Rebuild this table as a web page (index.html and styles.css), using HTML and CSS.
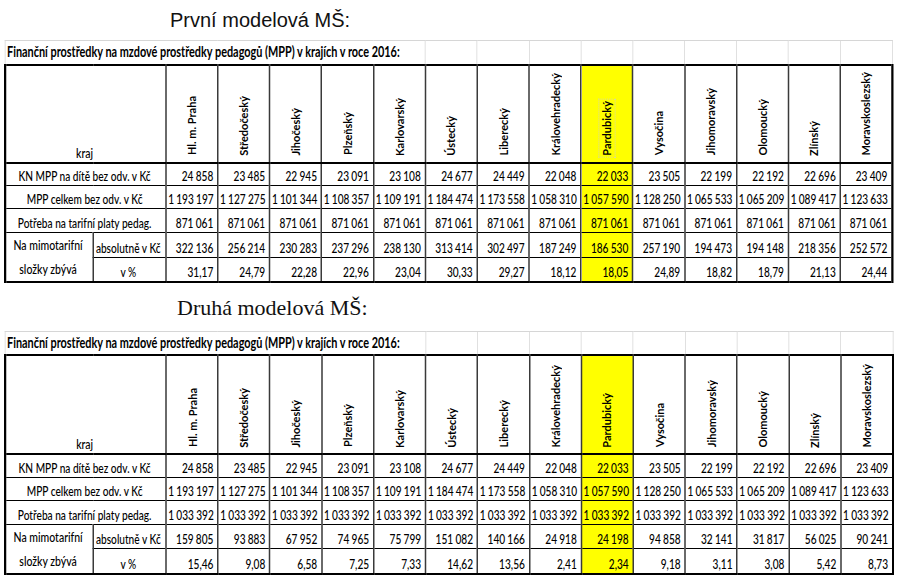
FILE: index.html
```html
<!DOCTYPE html>
<html lang="cs">
<head>
<meta charset="utf-8">
<title>Modelové MŠ</title>
<link rel="stylesheet" href="styles.css">
</head>
<body>
<div class="page">
  <h2 class="title title-sans">První modelová MŠ:</h2>
  <div class="sheet">
    <table class="grid">
      <colgroup><col class="c-a"><col class="c-b"><col class="c-r" span="14"></colgroup>
      <tr class="caption-row"><td colspan="7" class="caption">Finanční prostředky na mzdové prostředky pedagogů (MPP) v krajích v roce 2016:</td><td></td><td></td><td></td><td></td><td></td><td></td><td></td><td></td><td class="last"></td></tr>
      <tr class="head"><th colspan="2" class="kraj first">kraj</th><th class="region"><span class="rot">Hl. m. Praha</span></th><th class="region"><span class="rot">Středočeský</span></th><th class="region"><span class="rot">Jihočeský</span></th><th class="region"><span class="rot">Plzeňský</span></th><th class="region"><span class="rot">Karlovarský</span></th><th class="region"><span class="rot">Ústecký</span></th><th class="region"><span class="rot">Liberecký</span></th><th class="region"><span class="rot">Královehradecký</span></th><th class="region hl"><span class="rot sel">Pardubický</span></th><th class="region"><span class="rot">Vysočina</span></th><th class="region"><span class="rot">Jihomoravský</span></th><th class="region"><span class="rot">Olomoucký</span></th><th class="region"><span class="rot">Zlínský</span></th><th class="region last"><span class="rot">Moravskoslezský</span></th></tr>
      <tr class="row"><td colspan="2" class="label first">KN MPP na dítě bez odv. v Kč</td><td class="num">24 858</td><td class="num">23 485</td><td class="num">22 945</td><td class="num">23 091</td><td class="num">23 108</td><td class="num">24 677</td><td class="num">24 449</td><td class="num">22 048</td><td class="num hl">22 033</td><td class="num">23 505</td><td class="num">22 199</td><td class="num">22 192</td><td class="num">22 696</td><td class="num last">23 409</td></tr>
      <tr class="row"><td colspan="2" class="label first">MPP celkem bez odv. v Kč</td><td class="num">1 193 197</td><td class="num">1 127 275</td><td class="num">1 101 344</td><td class="num">1 108 357</td><td class="num">1 109 191</td><td class="num">1 184 474</td><td class="num">1 173 558</td><td class="num">1 058 310</td><td class="num hl">1 057 590</td><td class="num">1 128 250</td><td class="num">1 065 533</td><td class="num">1 065 209</td><td class="num">1 089 417</td><td class="num last">1 123 633</td></tr>
      <tr class="row"><td colspan="2" class="label first">Potřeba na tarifní platy pedag.</td><td class="num">871 061</td><td class="num">871 061</td><td class="num">871 061</td><td class="num">871 061</td><td class="num">871 061</td><td class="num">871 061</td><td class="num">871 061</td><td class="num">871 061</td><td class="num hl">871 061</td><td class="num">871 061</td><td class="num">871 061</td><td class="num">871 061</td><td class="num">871 061</td><td class="num last">871 061</td></tr>
      <tr class="row"><td rowspan="2" class="label merged first bottom">Na mimotarifní<br>složky zbývá</td><td class="label">absolutně v Kč</td><td class="num">322 136</td><td class="num">256 214</td><td class="num">230 283</td><td class="num">237 296</td><td class="num">238 130</td><td class="num">313 414</td><td class="num">302 497</td><td class="num">187 249</td><td class="num hl">186 530</td><td class="num">257 190</td><td class="num">194 473</td><td class="num">194 148</td><td class="num">218 356</td><td class="num last">252 572</td></tr>
      <tr class="row bottom"><td class="label">v %</td><td class="num">31,17</td><td class="num">24,79</td><td class="num">22,28</td><td class="num">22,96</td><td class="num">23,04</td><td class="num">30,33</td><td class="num">29,27</td><td class="num">18,12</td><td class="num hl">18,05</td><td class="num">24,89</td><td class="num">18,82</td><td class="num">18,79</td><td class="num">21,13</td><td class="num last">24,44</td></tr>
    </table>
  </div>

  <h2 class="title title-serif">Druhá modelová MŠ:</h2>
  <div class="sheet">
    <table class="grid grid-2">
      <colgroup><col class="c-a"><col class="c-b"><col class="c-r" span="14"></colgroup>
      <tr class="caption-row"><td colspan="7" class="caption">Finanční prostředky na mzdové prostředky pedagogů (MPP) v krajích v roce 2016:</td><td></td><td></td><td></td><td></td><td></td><td></td><td></td><td></td><td class="last"></td></tr>
      <tr class="head"><th colspan="2" class="kraj first">kraj</th><th class="region"><span class="rot">Hl. m. Praha</span></th><th class="region"><span class="rot">Středočeský</span></th><th class="region"><span class="rot">Jihočeský</span></th><th class="region"><span class="rot">Plzeňský</span></th><th class="region"><span class="rot">Karlovarský</span></th><th class="region"><span class="rot">Ústecký</span></th><th class="region"><span class="rot">Liberecký</span></th><th class="region"><span class="rot">Královehradecký</span></th><th class="region hl"><span class="rot">Pardubický</span></th><th class="region"><span class="rot">Vysočina</span></th><th class="region"><span class="rot">Jihomoravský</span></th><th class="region"><span class="rot">Olomoucký</span></th><th class="region"><span class="rot">Zlínský</span></th><th class="region last"><span class="rot">Moravskoslezský</span></th></tr>
      <tr class="row"><td colspan="2" class="label first">KN MPP na dítě bez odv. v Kč</td><td class="num">24 858</td><td class="num">23 485</td><td class="num">22 945</td><td class="num">23 091</td><td class="num">23 108</td><td class="num">24 677</td><td class="num">24 449</td><td class="num">22 048</td><td class="num hl">22 033</td><td class="num">23 505</td><td class="num">22 199</td><td class="num">22 192</td><td class="num">22 696</td><td class="num last">23 409</td></tr>
      <tr class="row"><td colspan="2" class="label first">MPP celkem bez odv. v Kč</td><td class="num">1 193 197</td><td class="num">1 127 275</td><td class="num">1 101 344</td><td class="num">1 108 357</td><td class="num">1 109 191</td><td class="num">1 184 474</td><td class="num">1 173 558</td><td class="num">1 058 310</td><td class="num hl">1 057 590</td><td class="num">1 128 250</td><td class="num">1 065 533</td><td class="num">1 065 209</td><td class="num">1 089 417</td><td class="num last">1 123 633</td></tr>
      <tr class="row"><td colspan="2" class="label first">Potřeba na tarifní platy pedag.</td><td class="num">1 033 392</td><td class="num">1 033 392</td><td class="num">1 033 392</td><td class="num">1 033 392</td><td class="num">1 033 392</td><td class="num">1 033 392</td><td class="num">1 033 392</td><td class="num">1 033 392</td><td class="num hl">1 033 392</td><td class="num">1 033 392</td><td class="num">1 033 392</td><td class="num">1 033 392</td><td class="num">1 033 392</td><td class="num last">1 033 392</td></tr>
      <tr class="row"><td rowspan="2" class="label merged first bottom">Na mimotarifní<br>složky zbývá</td><td class="label">absolutně v Kč</td><td class="num">159 805</td><td class="num">93 883</td><td class="num">67 952</td><td class="num">74 965</td><td class="num">75 799</td><td class="num">151 082</td><td class="num">140 166</td><td class="num">24 918</td><td class="num hl">24 198</td><td class="num">94 858</td><td class="num">32 141</td><td class="num">31 817</td><td class="num">56 025</td><td class="num last">90 241</td></tr>
      <tr class="row bottom"><td class="label">v %</td><td class="num">15,46</td><td class="num">9,08</td><td class="num">6,58</td><td class="num">7,25</td><td class="num">7,33</td><td class="num">14,62</td><td class="num">13,56</td><td class="num">2,41</td><td class="num hl">2,34</td><td class="num">9,18</td><td class="num">3,11</td><td class="num">3,08</td><td class="num">5,42</td><td class="num last">8,73</td></tr>
    </table>
  </div>
</div>
</body>
</html>
```

FILE: styles.css
```css
html, body {
  margin: 0;
  padding: 0;
  background: #ffffff;
}

.page {
  width: 896px;
  padding-left: 4px;
  overflow: hidden;
}

.title {
  margin: 0;
  font-weight: normal;
  color: #111;
}

.title-sans {
  font: 20px/24px "Liberation Sans", Arial, sans-serif;
  padding: 8px 0 0 166px;
  margin-bottom: 8px;
}

.title-serif {
  font: 22px/26px "Liberation Serif", "Times New Roman", serif;
  padding-left: 173px;
  margin: 12px 0 10px;
}

.sheet {
  width: 890px;
  overflow: hidden;
}

.grid {
  width: 1182.7px;
  table-layout: fixed;
  border-collapse: collapse;
  transform: scaleX(0.75);
  transform-origin: 0 0;
  font: 500 13.5px/16px "Lato", "Open Sans", sans-serif;
  color: #000;
}

.grid-2 {
  width: 1186.7px;
}

.c-a { width: 117px; }
.c-b { width: 97.4px; }
.c-r { width: 69.16px; }

.grid td,
.grid th {
  border-top: 1px solid #000;
  border-bottom: 1px solid #000;
  border-left: 2px solid #3a3a3a;
  border-right: 2px solid #3a3a3a;
  padding: 0 5px 1px 2px;
  white-space: nowrap;
  overflow: hidden;
  font-weight: 500;
  vertical-align: bottom;
}

.caption-row {
  height: 24px;
}

.grid .caption-row td {
  border: 1px solid #d6d6d6;
}

.grid .caption {
  font-weight: bold;
  font-size: 14.5px;
  text-align: left;
  padding: 0 0 0 2px;
  vertical-align: middle;
}

.head {
  height: 98px;
}

.grid-2 .head {
  height: 99px;
}

.grid .head th {
  border-top: 2px solid #000;
  border-bottom: 2px solid #000;
}

.grid .kraj {
  text-align: center;
  font-size: 14px;
  padding-bottom: 1px;
}

.grid .region {
  text-align: center;
  padding: 0 0 3px 0;
}

.rot {
  display: inline-block;
  writing-mode: vertical-rl;
  transform: rotate(180deg) scaleX(1.45);
  font: bold 11px/12px "Lato", "Open Sans", sans-serif;
  white-space: nowrap;
}

.sel {
  outline: 1px dotted #d8d8a0;
  outline-offset: 1px;
}

.row {
  height: 23.2px;
}

.label {
  text-align: center;
}

.grid .merged {
  font-size: 14px;
  line-height: 24.2px;
  vertical-align: middle;
  padding-bottom: 0;
}

.num {
  text-align: right;
  word-spacing: -0.5px;
}

.hl {
  background: #ffff00;
}

.grid .first {
  border-left: 3px solid #000;
}

.grid .last {
  border-right: 3px solid #000;
}

.grid .caption-row .last {
  border-right: 1px solid #d6d6d6;
}

.grid .bottom td,
.grid td.bottom {
  border-bottom: 2px solid #000;
}
```
